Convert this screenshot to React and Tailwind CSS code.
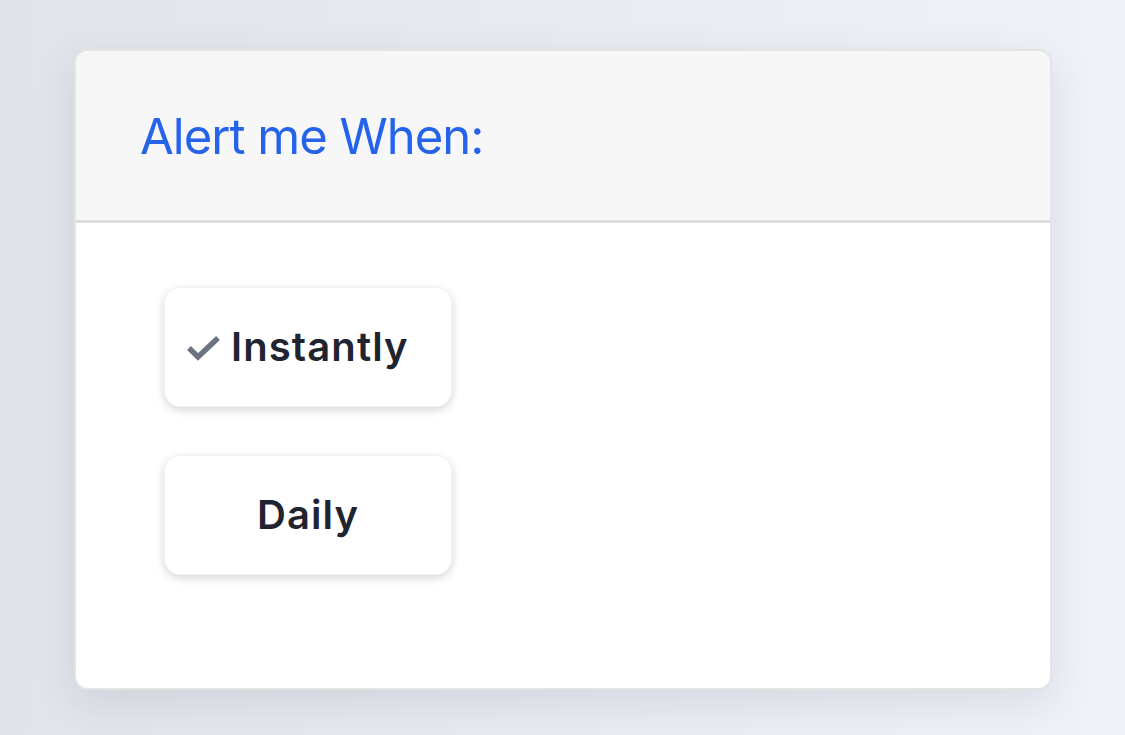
import React from "react";

export default function App() {
  return (
    <div
      className="w-[1125px] h-[735px] overflow-hidden bg-gradient-to-r from-[#e1e4ea] via-[#e8ebf0] to-[#eff2f8] pt-[49px] pl-[74px]"
      style={{ fontFamily: "Inter, 'Noto Sans', sans-serif" }}
    >
      <div className="w-[978px] h-[641px] rounded-[14px] border-2 border-[#e4e4e4] bg-white overflow-hidden shadow-[0_12px_40px_rgba(60,70,90,0.12)] flex flex-col">
        <div className="h-[172px] shrink-0 bg-[#f7f7f7] border-b-[3px] border-[#dddddd] flex items-center pl-[64px]">
          <h1 className="text-[49px] leading-none text-[#2563eb] tracking-[-1px] mt-[2px]">Alert me When:</h1>
        </div>
        <div className="flex flex-col gap-[48px] pt-[64px] pl-[88px]">
          <button className="w-[288px] h-[120px] rounded-[16px] bg-white shadow-[0_3px_10px_rgba(0,0,0,0.16)] border border-[#f3f3f3] flex items-center pl-[21px] gap-[10px] text-[#1f2430]">
            <svg width="35" height="27" viewBox="0 0 35 27" className="mt-[2px]">
              <polyline
                points="3,13 12,22 32,3"
                fill="none"
                stroke="#6b7280"
                strokeWidth="5.5"
              />
            </svg>
            <span className="text-[40px] font-semibold leading-none tracking-[1.1px]">Instantly</span>
          </button>
          <button className="w-[288px] h-[120px] rounded-[16px] bg-white shadow-[0_3px_10px_rgba(0,0,0,0.16)] border border-[#f3f3f3] flex items-center justify-center text-[#1f2430]">
            <span className="text-[40px] font-semibold leading-none tracking-[1.1px]">Daily</span>
          </button>
        </div>
      </div>
    </div>
  );
}
